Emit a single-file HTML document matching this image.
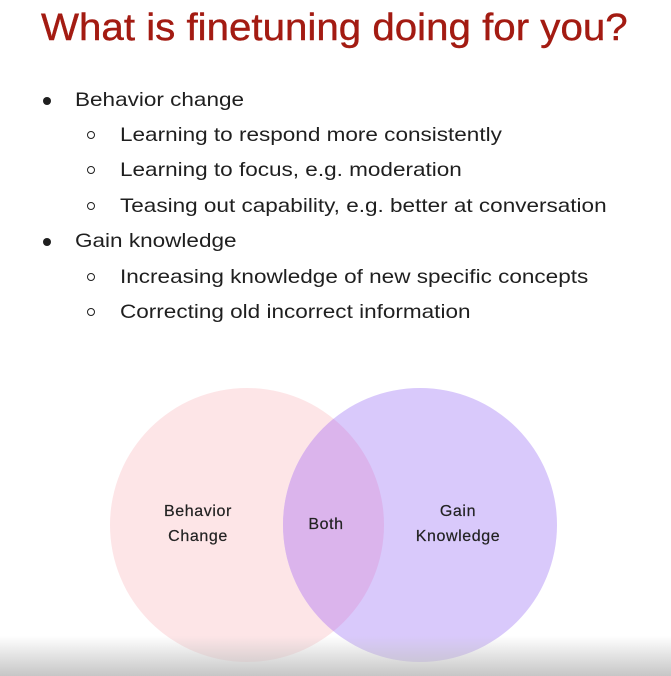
<!DOCTYPE html>
<html><head><style>
html,body{margin:0;padding:0;width:671px;height:676px;overflow:hidden;background:#fff;font-family:"Liberation Sans",sans-serif;}
.t{position:absolute;left:41px;top:7px;font-size:38px;color:#a31b12;white-space:nowrap;transform:scaleX(1.06);transform-origin:left top;-webkit-text-stroke:0.4px #a31b12;}
.l{position:absolute;font-size:19.5px;color:#1f1f1f;white-space:nowrap;transform:scaleX(1.155);transform-origin:left top;}
.d{position:absolute;width:8px;height:8px;border-radius:50%;background:#1f1f1f;}
.r{position:absolute;width:6px;height:6px;border-radius:50%;border:1.5px solid #1f1f1f;}
.v{position:absolute;font-size:16px;color:#222;text-align:center;line-height:25px;letter-spacing:0.6px;-webkit-text-stroke:0.2px #222;}
.fade{position:absolute;left:0;top:636px;width:671px;height:40px;background:linear-gradient(rgba(255,255,255,0),rgba(195,195,195,0.95));}
</style></head><body>
<div class="t">What is finetuning doing for you?</div>
<div class="d" style="left:43px;top:97px"></div><div class="l" style="left:75px;top:89px">Behavior change</div>
<div class="r" style="left:87px;top:131px"></div><div class="l" style="left:120px;top:124px">Learning to respond more consistently</div>
<div class="r" style="left:87px;top:166px"></div><div class="l" style="left:120px;top:159px">Learning to focus, e.g. moderation</div>
<div class="r" style="left:87px;top:202px"></div><div class="l" style="left:120px;top:195px">Teasing out capability, e.g. better at conversation</div>
<div class="d" style="left:43px;top:238px"></div><div class="l" style="left:75px;top:230px">Gain knowledge</div>
<div class="r" style="left:87px;top:273px"></div><div class="l" style="left:120px;top:266px">Increasing knowledge of new specific concepts</div>
<div class="r" style="left:87px;top:308px"></div><div class="l" style="left:120px;top:301px">Correcting old incorrect information</div>
<svg style="position:absolute;left:0;top:0" width="671" height="676">
<ellipse cx="247" cy="525" rx="137" ry="137" fill="#fde5e7"/>
<ellipse cx="420" cy="525" rx="137" ry="137" fill="#d9c9fb"/>
<clipPath id="c"><ellipse cx="247" cy="525" rx="137" ry="137"/></clipPath>
<ellipse cx="420" cy="525" rx="137" ry="137" fill="#dbb4ec" clip-path="url(#c)"/>
</svg>
<div class="v" style="left:138px;top:499px;width:120px">Behavior<br>Change</div>
<div class="v" style="left:291px;top:512px;width:70px">Both</div>
<div class="v" style="left:395px;top:499px;width:126px">Gain<br>Knowledge</div>
<div class="fade"></div>
</body></html>
